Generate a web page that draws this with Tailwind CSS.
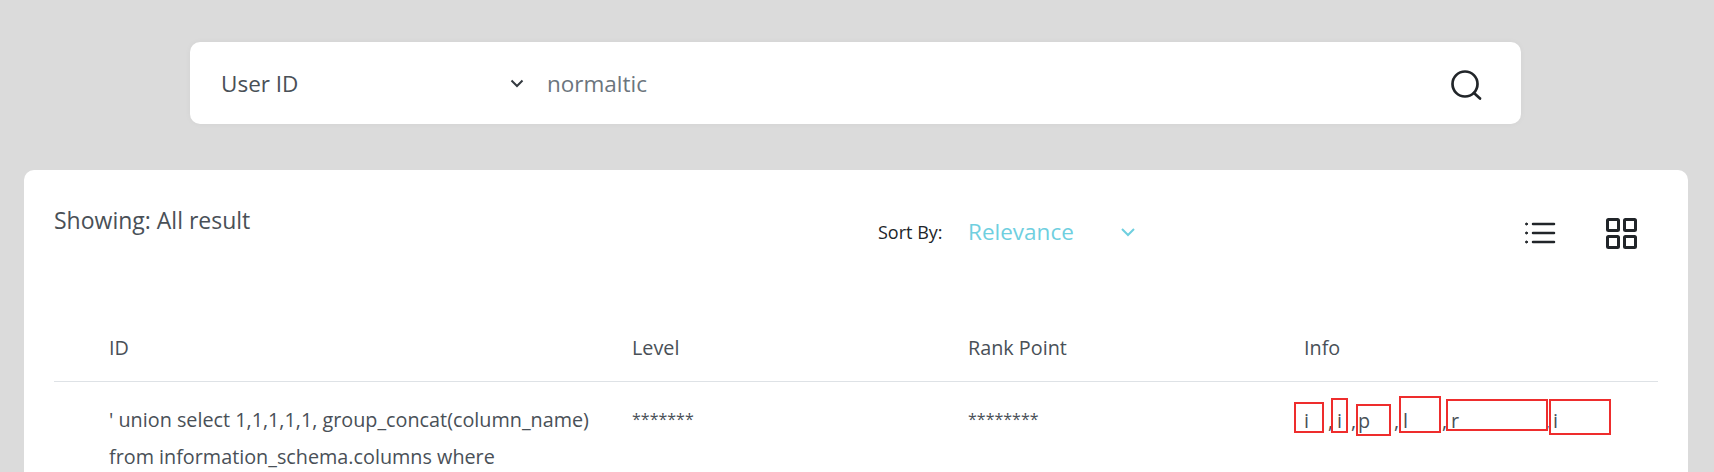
<!DOCTYPE html>
<html lang="en">

<head>
    <meta charset="UTF-8">
    <title>Search</title>
    <script src="https://cdn.jsdelivr.net/npm/@tailwindcss/browser@4"></script>
</head>

<body class="h-[472px] overflow-hidden bg-[#dbdbdb] font-['Open_Sans',sans-serif] text-[#495057]">
    <!-- search bar -->
    <div class="mx-[190px] mt-[42px] w-[1331px] h-[82px] bg-white rounded-[10px] flex items-center pl-[31px] pr-[38px] shadow-[0_0_6px_rgba(0,0,0,0.04)]">
        <span class="w-[288px] text-[22.5px] mt-[1px]">User ID</span>
        <svg class="w-4 h-4 text-[#343a40]" viewBox="0 0 16 16" fill="none" stroke="currentColor" stroke-width="2">
            <path d="M2.5 5.5 8 11l5.500-5.500" />
        </svg>
        <span class="ml-[22px] flex-1 text-[22.5px] mt-[1px] text-[#6c757d]">normaltic</span>
        <svg class="w-[32px] h-[32px] mt-[6px] text-[#212529]" viewBox="0 0 32 32" fill="none" stroke="currentColor" stroke-width="2.700" stroke-linecap="round">
            <circle cx="14" cy="14" r="12.500" />
            <path d="m23 23 6 5.500" />
        </svg>
    </div>

    <!-- results -->
    <div class="mx-[24px] mt-[46px] w-[1664px] h-[302px] overflow-hidden bg-white rounded-t-[10px] px-[30px]">
        <div class="flex h-[164px]">
            <div class="w-[824px] pt-[34px] text-[23px] leading-[32px]">Showing: All result</div>
            <div class="flex items-start pt-[47px]">
                <span class="w-[90px] text-[18px] leading-[30px] text-[#212529]">Sort By:</span>
                <span class="w-[152px] text-[22.5px] leading-[30px] text-[#6fcfdf]">Relevance</span>
                <svg class="w-4 h-4 mt-[7px] text-[#6fcfdf]" viewBox="0 0 16 16" fill="none" stroke="currentColor" stroke-width="2">
                    <path d="M2 5l6 6 6-6" />
                </svg>
            </div>
            <div class="ml-auto flex items-start pt-[47px] pr-[20px] gap-[50px] text-[#212529]">
                <svg class="w-8 h-8" viewBox="0 0 32 32" fill="none" stroke="currentColor" stroke-width="2.500" stroke-linecap="round">
                    <path d="M9 7h21M9 16h21M9 25h21" />
                    <circle cx="2.500" cy="7" r="1" fill="currentColor" stroke-width="1" />
                    <circle cx="2.500" cy="16" r="1" fill="currentColor" stroke-width="1" />
                    <circle cx="2.500" cy="25" r="1" fill="currentColor" stroke-width="1" />
                </svg>
                <svg class="w-8 h-8 mt-[1px]" viewBox="0 0 32 32" fill="none" stroke="currentColor" stroke-width="3">
                    <rect x="1.500" y="1.500" width="11" height="11" rx="1" />
                    <rect x="18.500" y="1.500" width="11" height="11" rx="1" />
                    <rect x="1.500" y="18.500" width="11" height="11" rx="1" />
                    <rect x="18.500" y="18.500" width="11" height="11" rx="1" />
                </svg>
            </div>
        </div>

        <div class="grid grid-cols-[523px_336px_336px_1fr] pl-[55px] h-[48px] border-b border-[#dee2e6] text-[19.800px] leading-[28px]">
            <span>ID</span><span>Level</span><span>Rank Point</span><span>Info</span>
        </div>

        <div class="grid grid-cols-[523px_336px_336px_1fr] pl-[55px] pt-[19px] text-[19.800px] leading-[37px]">
            <div class="w-[490px]">' union select 1,1,1,1,1, group_concat(column_name) from information_schema.columns where</div>
            <div class="text-[16px]">*******</div>
            <div class="text-[16px]">********</div>
            <div class="relative h-[36px] mt-[1px]">
                <!-- values that were blanked out in the original, only first letters and commas show -->
                <span class="absolute left-0 top-0">i</span>
                <span class="absolute left-[24px] top-0">,</span>
                <span class="absolute left-[33px] top-0">i</span>
                <span class="absolute left-[47px] top-0">,</span>
                <span class="absolute left-[54px] top-0">p</span>
                <span class="absolute left-[90px] top-0">,</span>
                <span class="absolute left-[99px] top-0">l</span>
                <span class="absolute left-[138px] top-0">,</span>
                <span class="absolute left-[147px] top-0">r</span>
                <span class="absolute left-[241px] top-0">,</span>
                <span class="absolute left-[249px] top-0">i</span>
                <div class="absolute left-[-10px] top-0 w-[30px] h-[31px] border-2 border-[#ee2d2d]"></div>
                <div class="absolute left-[27px] top-[-4px] w-[17px] h-[35px] border-2 border-[#ee2d2d]"></div>
                <div class="absolute left-[52px] top-[2px] w-[35px] h-[32px] border-2 border-[#ee2d2d]"></div>
                <div class="absolute left-[95px] top-[-6px] w-[42px] h-[37px] border-2 border-[#ee2d2d]"></div>
                <div class="absolute left-[142px] top-[-3px] w-[102px] h-[32px] border-2 border-[#ee2d2d]"></div>
                <div class="absolute left-[245px] top-[-3px] w-[62px] h-[36px] border-2 border-[#ee2d2d]"></div>
            </div>
        </div>
    </div>
</body>

</html>
